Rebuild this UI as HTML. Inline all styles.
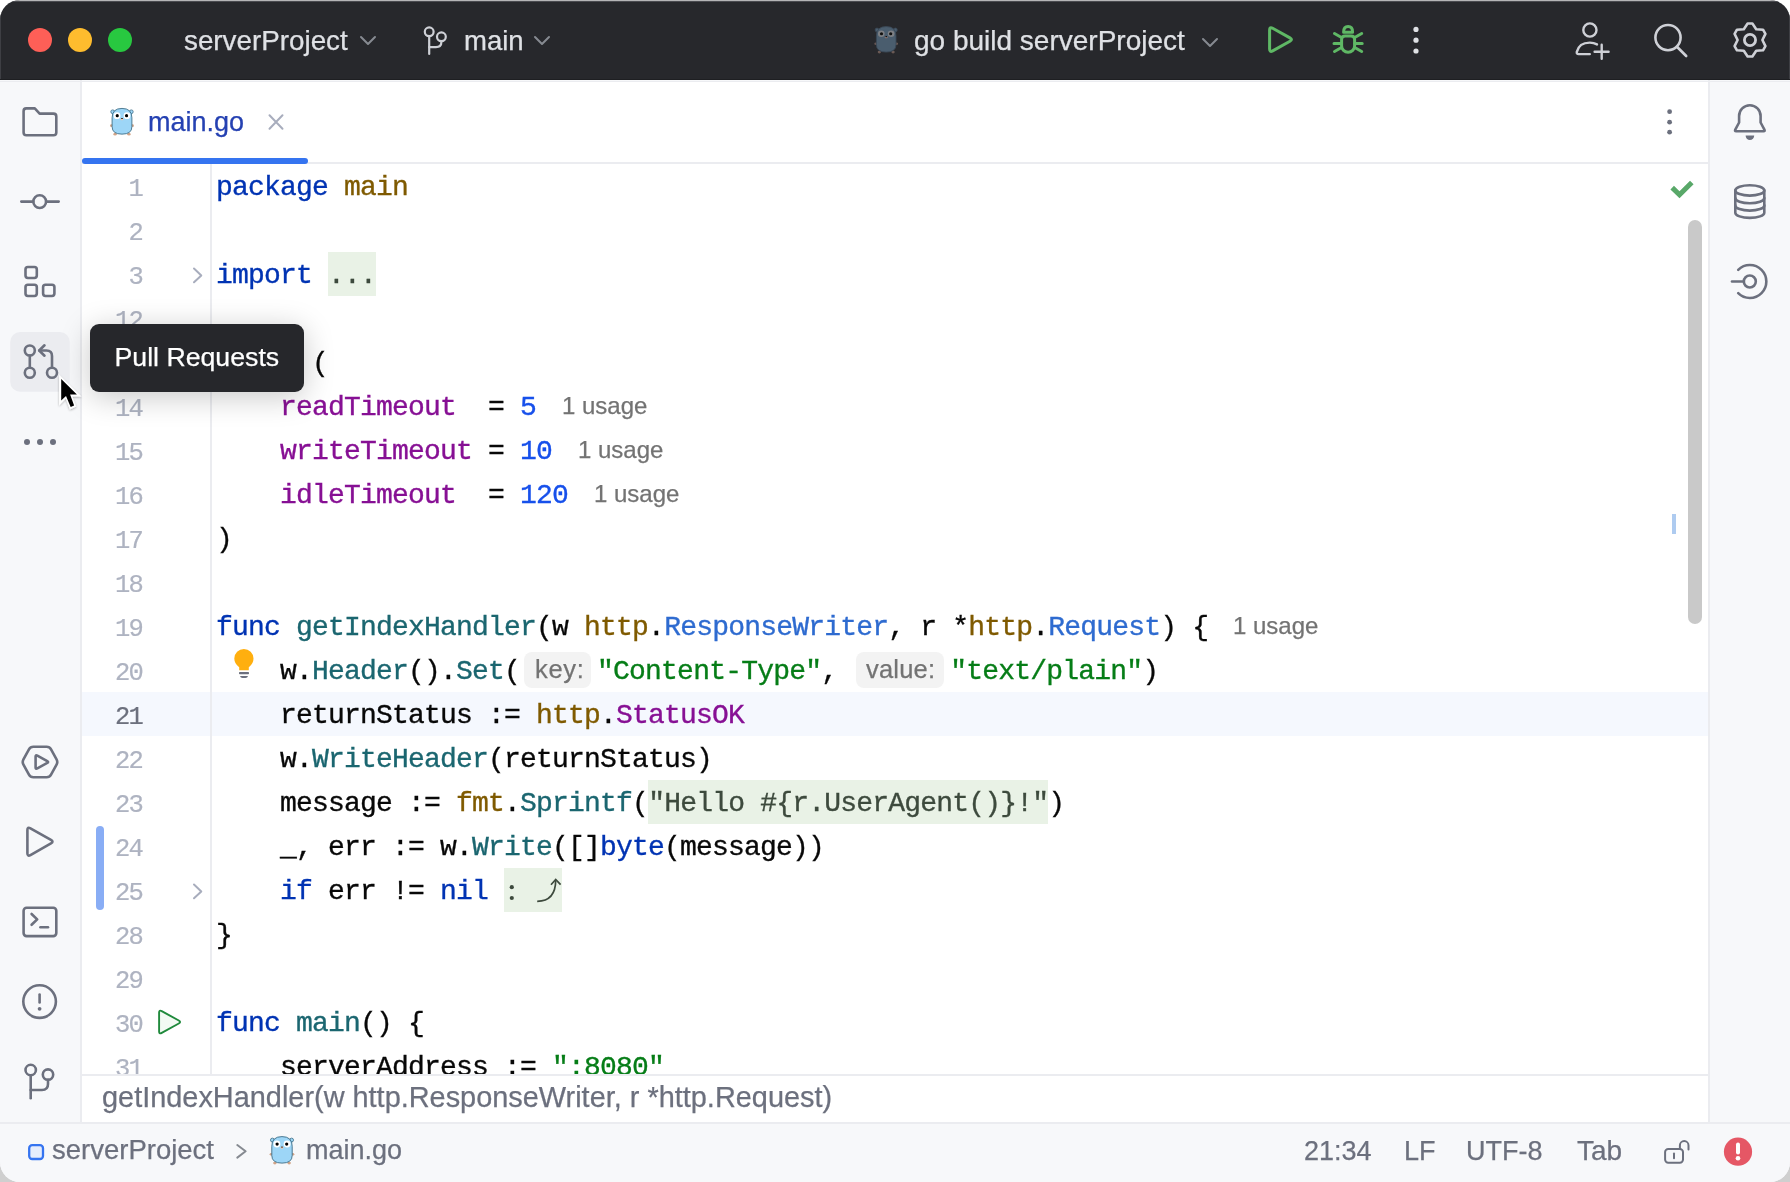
<!DOCTYPE html>
<html><head><meta charset="utf-8"><style>
*{margin:0;padding:0;box-sizing:border-box}
html,body{width:1790px;height:1182px;overflow:hidden;background:#ffffff}
body{position:relative;font-family:"Liberation Sans", sans-serif}
.t{position:absolute;white-space:pre;font-family:"Liberation Sans", sans-serif;-webkit-text-stroke:0.25px currentColor}
.abs{position:absolute}
.win{position:absolute;left:0;top:0;width:1790px;height:1182px;border-radius:20px;overflow:hidden;background:#f7f8fa;will-change:transform}
.row{position:absolute;left:82px;width:1626px;height:44px}
.ln{position:absolute;-webkit-text-stroke:0.2px currentColor;right:1566px;font-family:"Liberation Mono", monospace;font-size:25.5px;letter-spacing:-1.8px;color:#aeb3c1;white-space:pre}
.code{position:absolute;left:216px;font-family:"Liberation Mono", monospace;font-size:28px;letter-spacing:-0.8px;color:#080808;white-space:pre;-webkit-text-stroke:0.35px currentColor}
.kw{color:#0033b3}
.pk{color:#7f5a00}
.fn{color:#1b6670}
.cn{color:#871094}
.nu{color:#1750eb}
.st{color:#067d17}
.ty{color:#2e6bd0}
.hint{position:absolute;font-family:"Liberation Sans", sans-serif;font-size:24px;color:#737373;white-space:pre}
svg{position:absolute;overflow:visible}
</style></head>
<body>
<div class="abs" style="left:0;top:1160px;width:24px;height:22px;background:#cfcfcf"></div><div class="abs" style="left:1766px;top:1160px;width:24px;height:22px;background:#cfcfcf"></div><div class="win"><div class="abs" style="left:0;top:0;width:1790px;height:80px;background:#27282c"></div>
<div class="abs" style="left:0;top:0;width:1790px;height:1px;background:#b5b5b7"></div>
<div class="abs" style="left:0;top:1px;width:1790px;height:1px;background:#4a4b50"></div>
<div class="abs" style="left:0;top:79px;width:1790px;height:1px;background:#1e1f22"></div>
<div class="abs" style="left:0;top:0;width:1px;height:79px;background:#3e3f44"></div>
<div class="abs" style="left:1789px;top:0;width:1px;height:79px;background:#3e3f44"></div>
<div class="abs" style="left:0;top:81px;width:1790px;height:1px;background:#ebecf0"></div>
<div class="abs" style="left:28px;top:28px;width:24px;height:24px;border-radius:50%;background:#fe5f57"></div>
<div class="abs" style="left:68px;top:28px;width:24px;height:24px;border-radius:50%;background:#febc2e"></div>
<div class="abs" style="left:108px;top:28px;width:24px;height:24px;border-radius:50%;background:#28c840"></div>
<div class="t" style="left:184px;top:24.68px;font-size:27.8px;line-height:31.97px;color:#dfe1e5;letter-spacing:0px;">serverProject</div>
<div class="t" style="left:464px;top:24.96px;font-size:27.5px;line-height:31.62px;color:#dfe1e5;letter-spacing:0px;">main</div>
<div class="t" style="left:914px;top:24.50px;font-size:28px;line-height:32.2px;color:#dfe1e5;letter-spacing:0px;">go build serverProject</div>
<svg style="left:360px;top:36px" width="16" height="9"><path d="M1 1 L8.0 8 L15 1" fill="none" stroke="#868a91" stroke-width="2" stroke-linecap="round" stroke-linejoin="round"/></svg>
<svg style="left:534px;top:36px" width="16" height="9"><path d="M1 1 L8.0 8 L15 1" fill="none" stroke="#868a91" stroke-width="2" stroke-linecap="round" stroke-linejoin="round"/></svg>
<svg style="left:1202px;top:38px" width="16" height="9"><path d="M1 1 L8.0 8 L15 1" fill="none" stroke="#868a91" stroke-width="2" stroke-linecap="round" stroke-linejoin="round"/></svg>
<div class="abs" style="left:80px;top:80px;width:2px;height:1042px;background:#ebecf0"></div>
<div class="abs" style="left:1708px;top:80px;width:2px;height:1042px;background:#ebecf0"></div>
<div class="abs" style="left:82px;top:82px;width:1626px;height:992px;background:#ffffff"></div>
<div class="abs" style="left:82px;top:162px;width:1626px;height:2px;background:#ebecf0"></div>
<div class="abs" style="left:82px;top:158px;width:226px;height:6px;border-radius:3px;background:#3574f0"></div>
<div class="t" style="left:148px;top:107.32px;font-size:27px;line-height:31.05px;color:#2541b2;letter-spacing:0px;">main.go</div>
<div class="abs" style="left:82px;top:1074px;width:1626px;height:48px;background:#ffffff;border-top:2px solid #ebecf0"></div>
<div class="t" style="left:102px;top:1081.37px;font-size:28.9px;line-height:33.23px;color:#6c707e;letter-spacing:0px;">getIndexHandler(w http.ResponseWriter, r *http.Request)</div>
<div class="abs" style="left:0;top:1122px;width:1790px;height:60px;background:#f7f8fa;border-top:2px solid #ebecf0"></div>
<div class="t" style="left:52px;top:1134.16px;font-size:27.5px;line-height:31.62px;color:#6c707e;letter-spacing:0px;">serverProject</div>
<div class="t" style="left:306px;top:1134.62px;font-size:27px;line-height:31.05px;color:#6c707e;letter-spacing:0px;">main.go</div>
<div class="t" style="left:1304px;top:1135.82px;font-size:27px;line-height:31.05px;color:#6c707e;letter-spacing:0px;">21:34</div>
<div class="t" style="left:1404px;top:1135.82px;font-size:27px;line-height:31.05px;color:#6c707e;letter-spacing:0px;">LF</div>
<div class="t" style="left:1466px;top:1135.82px;font-size:27px;line-height:31.05px;color:#6c707e;letter-spacing:0px;">UTF-8</div>
<div class="t" style="left:1577px;top:1134.90px;font-size:28px;line-height:32.2px;color:#6c707e;letter-spacing:0px;">Tab</div>
<div class="abs" style="left:210px;top:164px;width:2px;height:910px;background:#ebecf0"></div>
<div class="abs" style="left:328px;top:252px;width:48px;height:44px;background:#e9f2e6"></div>
<div class="abs" style="left:648px;top:780px;width:400px;height:44px;background:#e9f2e6"></div>
<div class="abs" style="left:504px;top:868px;width:58px;height:44px;background:#e9f2e6"></div>
<div class="abs" style="left:82px;top:692px;width:1626px;height:44px;background:#f5f8fe"></div>
<div class="abs" style="left:0;top:0;width:1790px;height:1074px;overflow:hidden"><div class="row" style="top:164px;"><div class="ln" style="top:0;line-height:44px;;padding-top:4px">1</div><div class="code" style="left:134px;top:0;line-height:44px;padding-top:2px"><span class="kw">package</span> <span class="pk">main</span></div></div><div class="row" style="top:208px;"><div class="ln" style="top:0;line-height:44px;;padding-top:4px">2</div><div class="code" style="left:134px;top:0;line-height:44px;padding-top:2px"></div></div><div class="row" style="top:252px;"><div class="ln" style="top:0;line-height:44px;;padding-top:4px">3</div><div class="code" style="left:134px;top:0;line-height:44px;padding-top:2px"><span class="kw">import</span> <span style="color:#3d4a3d">...</span></div></div><div class="row" style="top:296px;"><div class="ln" style="top:0;line-height:44px;;padding-top:4px">12</div><div class="code" style="left:134px;top:0;line-height:44px;padding-top:2px"></div></div><div class="row" style="top:340px;"><div class="ln" style="top:0;line-height:44px;;padding-top:4px">13</div><div class="code" style="left:134px;top:0;line-height:44px;padding-top:2px"><span class="kw">const</span> (</div></div><div class="row" style="top:384px;"><div class="ln" style="top:0;line-height:44px;;padding-top:4px">14</div><div class="code" style="left:134px;top:0;line-height:44px;padding-top:2px">    <span class="cn">readTimeout</span>  = <span class="nu">5</span></div></div><div class="row" style="top:428px;"><div class="ln" style="top:0;line-height:44px;;padding-top:4px">15</div><div class="code" style="left:134px;top:0;line-height:44px;padding-top:2px">    <span class="cn">writeTimeout</span> = <span class="nu">10</span></div></div><div class="row" style="top:472px;"><div class="ln" style="top:0;line-height:44px;;padding-top:4px">16</div><div class="code" style="left:134px;top:0;line-height:44px;padding-top:2px">    <span class="cn">idleTimeout</span>  = <span class="nu">120</span></div></div><div class="row" style="top:516px;"><div class="ln" style="top:0;line-height:44px;;padding-top:4px">17</div><div class="code" style="left:134px;top:0;line-height:44px;padding-top:2px">)</div></div><div class="row" style="top:560px;"><div class="ln" style="top:0;line-height:44px;;padding-top:4px">18</div><div class="code" style="left:134px;top:0;line-height:44px;padding-top:2px"></div></div><div class="row" style="top:604px;"><div class="ln" style="top:0;line-height:44px;;padding-top:4px">19</div><div class="code" style="left:134px;top:0;line-height:44px;padding-top:2px"><span class="kw">func</span> <span class="fn">getIndexHandler</span>(w <span class="pk">http</span>.<span class="ty">ResponseWriter</span>, r *<span class="pk">http</span>.<span class="ty">Request</span>) {</div></div><div class="row" style="top:648px;"><div class="ln" style="top:0;line-height:44px;;padding-top:4px">20</div><div class="code" style="left:134px;top:0;line-height:44px;padding-top:2px">    w.<span class="fn">Header</span>().<span class="fn">Set</span>(<span style="display:inline-block;width:77px"></span><span class="st">"Content-Type"</span>, <span style="display:inline-block;width:97px"></span><span class="st">"text/plain"</span>)</div></div><div class="row" style="top:692px;"><div class="ln" style="top:0;line-height:44px;color:#6c707e;;padding-top:4px">21</div><div class="code" style="left:134px;top:0;line-height:44px;padding-top:2px">    returnStatus := <span class="pk">http</span>.<span class="cn">StatusOK</span></div></div><div class="row" style="top:736px;"><div class="ln" style="top:0;line-height:44px;;padding-top:4px">22</div><div class="code" style="left:134px;top:0;line-height:44px;padding-top:2px">    w.<span class="fn">WriteHeader</span>(returnStatus)</div></div><div class="row" style="top:780px;"><div class="ln" style="top:0;line-height:44px;;padding-top:4px">23</div><div class="code" style="left:134px;top:0;line-height:44px;padding-top:2px">    message := <span class="pk">fmt</span>.<span class="fn">Sprintf</span>(<span style="color:#3d4a3d">"Hello #{r.UserAgent()}!"</span>)</div></div><div class="row" style="top:824px;"><div class="ln" style="top:0;line-height:44px;;padding-top:4px">24</div><div class="code" style="left:134px;top:0;line-height:44px;padding-top:2px">    _, err := w.<span class="fn">Write</span>([]<span class="kw">byte</span>(message))</div></div><div class="row" style="top:868px;"><div class="ln" style="top:0;line-height:44px;;padding-top:4px">25</div><div class="code" style="left:134px;top:0;line-height:44px;padding-top:2px">    <span class="kw">if</span> err != <span class="kw">nil</span></div></div><div class="row" style="top:912px;"><div class="ln" style="top:0;line-height:44px;;padding-top:4px">28</div><div class="code" style="left:134px;top:0;line-height:44px;padding-top:2px">}</div></div><div class="row" style="top:956px;"><div class="ln" style="top:0;line-height:44px;;padding-top:4px">29</div><div class="code" style="left:134px;top:0;line-height:44px;padding-top:2px"></div></div><div class="row" style="top:1000px;"><div class="ln" style="top:0;line-height:44px;;padding-top:4px">30</div><div class="code" style="left:134px;top:0;line-height:44px;padding-top:2px"><span class="kw">func</span> <span class="fn">main</span>() {</div></div><div class="row" style="top:1044px;"><div class="ln" style="top:0;line-height:44px;;padding-top:4px">31</div><div class="code" style="left:134px;top:0;line-height:44px;padding-top:2px">    serverAddress := <span class="st">":8080"</span></div></div></div>
<div class="abs" style="left:210px;top:164px;width:2px;height:910px;background:#ebecf0"></div>
<div class="t" style="left:562px;top:392.38px;font-size:24px;line-height:27.6px;color:#737373;letter-spacing:0px;">1 usage</div>
<div class="t" style="left:578px;top:436.38px;font-size:24px;line-height:27.6px;color:#737373;letter-spacing:0px;">1 usage</div>
<div class="t" style="left:594px;top:480.38px;font-size:24px;line-height:27.6px;color:#737373;letter-spacing:0px;">1 usage</div>
<div class="t" style="left:1233px;top:612.38px;font-size:24px;line-height:27.6px;color:#737373;letter-spacing:0px;">1 usage</div>
<div class="abs" style="left:524px;top:652px;width:67px;height:36px;border-radius:8px;background:#f3f3f3"></div>
<div class="t" style="left:535px;top:654.50px;font-size:25.5px;line-height:29.32px;color:#737373;letter-spacing:0.7px;">key:</div>
<div class="abs" style="left:856px;top:652px;width:88px;height:36px;border-radius:8px;background:#f3f3f3"></div>
<div class="t" style="left:866px;top:654.50px;font-size:25.5px;line-height:29.32px;color:#737373;letter-spacing:0.2px;">value:</div>
<div class="abs" style="left:1688px;top:220px;width:14px;height:404px;border-radius:7px;background:#c9c9c9"></div>
<div class="abs" style="left:1672px;top:514px;width:4px;height:20px;background:#aecbf0"></div>
<div class="abs" style="left:96px;top:826px;width:8px;height:84px;border-radius:4px;background:#89adf5"></div>
<div class="abs" style="left:90px;top:324px;width:214px;height:68px;border-radius:9px;background:#26272b;box-shadow:0 5px 30px rgba(0,0,0,0.22)"></div>
<div class="t" style="left:114.5px;top:342.40px;font-size:26.7px;line-height:30.7px;color:#ffffff;letter-spacing:0px;">Pull Requests</div>
<svg style="left:0;top:0" width="1790" height="1182" viewBox="0 0 1790 1182"><defs><filter id="csh" x="-50%" y="-50%" width="200%" height="200%"><feDropShadow dx="0" dy="1" stdDeviation="1.2" flood-opacity="0.3"/></filter></defs><g fill="none" stroke="#ced0d6" stroke-width="2.2" stroke-linecap="round" stroke-linejoin="round"><circle cx="429.2" cy="31.8" r="4.4"/><circle cx="441.4" cy="36.8" r="4.4"/><path d="M429.2 36.2 V54"/><path d="M429.2 47.2 H436 Q441.4 47.2 441.4 41.8 V41.2"/></g><path d="M1272.66 28.30 Q1269.60 26.60 1269.60 30.10 L1269.60 49.10 Q1269.60 52.60 1272.66 50.90 L1289.94 41.30 Q1293.00 39.60 1289.94 37.90 Z" fill="none" stroke="#5fb865" stroke-width="3" stroke-linecap="round" stroke-linejoin="round"/><g fill="none" stroke="#5fb865" stroke-width="3" stroke-linecap="round" stroke-linejoin="round"><path d="M1343.6 32.2 Q1343.6 26.6 1348.1 26.6 Q1352.6 26.6 1352.6 32.2 Z"/><path d="M1341.6 39.6 Q1341.6 35.9 1345.2 35.9 H1351 Q1354.6 35.9 1354.6 39.6 V45.8 A6.5 6.4 0 0 1 1341.6 45.8 Z"/><path d="M1334.5 33.5 L1341.5 37.5 M1334 43.4 H1341.5 M1334.5 51.5 L1341.5 47.5"/><path d="M1361.7 33.5 L1354.7 37.5 M1362.2 43.4 H1354.7 M1361.7 51.5 L1354.7 47.5"/></g><circle cx="1416" cy="29.4" r="2.6" fill="#dfe1e5"/><circle cx="1416" cy="40.2" r="2.6" fill="#dfe1e5"/><circle cx="1416" cy="51" r="2.6" fill="#dfe1e5"/><g fill="none" stroke="#ced0d6" stroke-width="2.4" stroke-linecap="round" stroke-linejoin="round"><circle cx="1589.9" cy="30" r="6.6"/><path d="M1589.8 54.1 H1578.6 Q1576.4 54.1 1576.8 51.9 C1578.2 46.2 1583 42.6 1589.8 42.6 Q1593.8 42.6 1597 44.4"/><path d="M1601.7 44.8 V58.8 M1594.6 51.8 H1608.6"/></g><g fill="none" stroke="#ced0d6" stroke-width="2.6" stroke-linecap="round" stroke-linejoin="round"><circle cx="1668" cy="37.6" r="12.6"/><path d="M1677.2 47 L1686.2 56"/></g><path d="M1747.60 23.57 L1752.40 23.57 L1756.20 29.26 L1763.03 29.71 L1765.42 33.86 L1762.40 40.00 L1765.42 46.14 L1763.03 50.29 L1756.20 50.74 L1752.40 56.43 L1747.60 56.43 L1743.80 50.74 L1736.97 50.29 L1734.58 46.14 L1737.60 40.00 L1734.58 33.86 L1736.97 29.71 L1743.80 29.26 Z" fill="none" stroke="#ced0d6" stroke-width="2.6" stroke-linecap="round" stroke-linejoin="round"/><circle cx="1750" cy="40" r="5.6" fill="none" stroke="#ced0d6" stroke-width="2.8" stroke-linecap="round" stroke-linejoin="round"/><path d="M26.2 108.4 H34.8 L39.6 113.6 H53.5 Q56.3 113.6 56.3 116.4 V132.4 Q56.3 135.2 53.5 135.2 H26.4 Q23.6 135.2 23.6 132.4 V111.2 Q23.6 108.4 26.2 108.4 Z" fill="none" stroke="#6c707e" stroke-width="2.6" stroke-linecap="round" stroke-linejoin="round"/><g fill="none" stroke="#6c707e" stroke-width="2.6" stroke-linecap="round" stroke-linejoin="round"><circle cx="39.7" cy="201.6" r="6.4"/><path d="M21.3 201.6 H33.3 M46.1 201.6 H58.7"/></g><g fill="none" stroke="#6c707e" stroke-width="2.6" stroke-linecap="round" stroke-linejoin="round"><rect x="25.5" y="267" width="11.3" height="11" rx="2.4"/><rect x="25.5" y="284.7" width="11.3" height="11.3" rx="2.4"/><rect x="43.1" y="284.7" width="11.3" height="11.3" rx="2.4"/></g><rect x="10.2" y="332" width="59.6" height="59.7" rx="10" fill="#ebecf0"/><g fill="none" stroke="#6c707e" stroke-width="2.6" stroke-linecap="round" stroke-linejoin="round"><circle cx="29.8" cy="350.5" r="5"/><circle cx="29.8" cy="372.7" r="5"/><circle cx="52" cy="372.7" r="5"/><path d="M29.8 355.5 V367.7"/><path d="M52 367.7 V356 Q52 350.5 46.5 350.5 H39.3"/><path d="M44.5 345.3 L39.2 350.5 L44.5 355.7"/></g><circle cx="27" cy="441.9" r="3" fill="#6c707e"/><circle cx="40" cy="441.9" r="3" fill="#6c707e"/><circle cx="53" cy="441.9" r="3" fill="#6c707e"/><path d="M23.45 764.63 Q22.00 762.00 23.45 759.37 L28.95 749.43 Q30.40 746.80 33.40 746.80 L46.60 746.80 Q49.60 746.80 51.05 749.43 L56.55 759.37 Q58.00 762.00 56.55 764.63 L51.05 774.57 Q49.60 777.20 46.60 777.20 L33.40 777.20 Q30.40 777.20 28.95 774.57 Z" fill="none" stroke="#6c707e" stroke-width="2.6" stroke-linecap="round" stroke-linejoin="round"/><path d="M37.35 755.57 Q35.60 754.60 35.60 756.60 L35.60 767.40 Q35.60 769.40 37.35 768.43 L47.25 762.97 Q49.00 762.00 47.25 761.03 Z" fill="none" stroke="#6c707e" stroke-width="2.6" stroke-linecap="round" stroke-linejoin="round"/><path d="M30.44 828.33 Q27.40 826.60 27.40 830.10 L27.40 853.30 Q27.40 856.80 30.44 855.07 L50.96 843.43 Q54.00 841.70 50.96 839.97 Z" fill="none" stroke="#6c707e" stroke-width="2.6" stroke-linecap="round" stroke-linejoin="round"/><g fill="none" stroke="#6c707e" stroke-width="2.6" stroke-linecap="round" stroke-linejoin="round"><rect x="23.6" y="907.7" width="32.7" height="28.4" rx="3"/><path d="M31.6 914 L37.2 919.4 L31.6 924.8"/><path d="M40.4 927.3 H48"/></g><g fill="none" stroke="#6c707e" stroke-width="2.6" stroke-linecap="round" stroke-linejoin="round"><circle cx="39.6" cy="1001.6" r="16.3"/><path d="M39.6 994.6 V1002.4"/></g><circle cx="39.6" cy="1008.8" r="1.9" fill="#6c707e"/><g fill="none" stroke="#6c707e" stroke-width="2.6" stroke-linecap="round" stroke-linejoin="round"><circle cx="30.7" cy="1070" r="5.2"/><circle cx="48" cy="1074.6" r="5.2"/><path d="M30.7 1075.2 V1098.2"/><path d="M30.7 1090 H42 Q48 1090 48 1084 V1079.8"/></g><path d="M1739.1 122.5 V116 A10.75 10.75 0 0 1 1760.6 116 V122.5 L1764.4 129.6 Q1765.2 131.2 1763.6 131.2 H1736.1 Q1734.5 131.2 1735.3 129.6 Z" fill="none" stroke="#6c707e" stroke-width="2.6" stroke-linecap="round" stroke-linejoin="round"/><path d="M1745.6 135.6 H1754.2 A4.3 4.3 0 0 1 1745.6 135.6 Z" fill="#6c707e"/><g fill="none" stroke="#6c707e" stroke-width="2.6" stroke-linecap="round" stroke-linejoin="round"><ellipse cx="1749.8" cy="190.4" rx="14.5" ry="5.2"/><path d="M1735.3 190.4 V212.7 A14.5 5.2 0 0 0 1764.3 212.7 V190.4"/><path d="M1735.3 198.1 A14.5 5.2 0 0 0 1764.3 198.1"/><path d="M1735.3 205.4 A14.5 5.2 0 0 0 1764.3 205.4"/></g><g fill="none" stroke="#6c707e" stroke-width="2.6" stroke-linecap="round" stroke-linejoin="round"><circle cx="1749.8" cy="281.5" r="6"/><path d="M1738.2 269.8 A16.5 16.5 0 1 1 1738.2 293.2"/><path d="M1732 281.5 H1743.8"/></g><path d="M269.5 115.3 L282.5 128.7 M282.5 115.3 L269.5 128.7" fill="none" stroke="#a8adbd" stroke-width="2" stroke-linecap="round" stroke-linejoin="round"/><circle cx="1669.6" cy="111.7" r="2.4" fill="#6c707e"/><circle cx="1669.6" cy="122.2" r="2.4" fill="#6c707e"/><circle cx="1669.6" cy="132.2" r="2.4" fill="#6c707e"/><g transform="translate(112.1 108.4) scale(0.99)"><circle cx="0.6" cy="3.4" r="1.9" fill="#9dd6f7" stroke="#3f6f88" stroke-width="0.8"/><circle cx="19.4" cy="3.4" r="1.9" fill="#9dd6f7" stroke="#3f6f88" stroke-width="0.8"/><ellipse cx="-0.4" cy="17.4" rx="1.7" ry="1.3" fill="#d2a487"/><ellipse cx="20.4" cy="17.4" rx="1.7" ry="1.3" fill="#d2a487"/><ellipse cx="3" cy="26" rx="1.7" ry="1.4" fill="#d2a487"/><ellipse cx="17" cy="26" rx="1.7" ry="1.4" fill="#d2a487"/><path d="M0 9.5 Q0 0 10 0 Q20 0 20 9.5 V18.5 Q20 26 10 26 Q0 26 0 18.5 Z" fill="#9dd6f7" stroke="#3f6f88" stroke-width="0.9"/><circle cx="5" cy="7.3" r="3.4" fill="#ffffff"/><circle cx="15" cy="7.3" r="3.4" fill="#ffffff"/><circle cx="5.2" cy="7.3" r="1.6" fill="#000000"/><circle cx="14.6" cy="7.3" r="1.6" fill="#000000"/><ellipse cx="10" cy="10.8" rx="1.4" ry="1.2" fill="#f1c7ae"/><ellipse cx="10" cy="10.2" rx="0.9" ry="0.6" fill="#000"/></g><g transform="translate(876.4 26.6) scale(0.98)"><circle cx="0.6" cy="3.4" r="1.9" fill="#4a5d6e" stroke="#3a4856" stroke-width="0.8"/><circle cx="19.4" cy="3.4" r="1.9" fill="#4a5d6e" stroke="#3a4856" stroke-width="0.8"/><ellipse cx="-0.4" cy="17.4" rx="1.7" ry="1.3" fill="#6b5a55"/><ellipse cx="20.4" cy="17.4" rx="1.7" ry="1.3" fill="#6b5a55"/><ellipse cx="3" cy="26" rx="1.7" ry="1.4" fill="#6b5a55"/><ellipse cx="17" cy="26" rx="1.7" ry="1.4" fill="#6b5a55"/><path d="M0 9.5 Q0 0 10 0 Q20 0 20 9.5 V18.5 Q20 26 10 26 Q0 26 0 18.5 Z" fill="#4a5d6e" stroke="#3a4856" stroke-width="0.9"/><circle cx="5" cy="7.3" r="3.4" fill="#7d7f83"/><circle cx="15" cy="7.3" r="3.4" fill="#7d7f83"/><circle cx="5.2" cy="7.3" r="1.6" fill="#111111"/><circle cx="14.6" cy="7.3" r="1.6" fill="#111111"/><ellipse cx="10" cy="10.8" rx="1.4" ry="1.2" fill="#8a7570"/><ellipse cx="10" cy="10.2" rx="0.9" ry="0.6" fill="#000"/></g><g transform="translate(271.8 1136.6) scale(1.02)"><circle cx="0.6" cy="3.4" r="1.9" fill="#9dd6f7" stroke="#3f6f88" stroke-width="0.8"/><circle cx="19.4" cy="3.4" r="1.9" fill="#9dd6f7" stroke="#3f6f88" stroke-width="0.8"/><ellipse cx="-0.4" cy="17.4" rx="1.7" ry="1.3" fill="#d2a487"/><ellipse cx="20.4" cy="17.4" rx="1.7" ry="1.3" fill="#d2a487"/><ellipse cx="3" cy="26" rx="1.7" ry="1.4" fill="#d2a487"/><ellipse cx="17" cy="26" rx="1.7" ry="1.4" fill="#d2a487"/><path d="M0 9.5 Q0 0 10 0 Q20 0 20 9.5 V18.5 Q20 26 10 26 Q0 26 0 18.5 Z" fill="#9dd6f7" stroke="#3f6f88" stroke-width="0.9"/><circle cx="5" cy="7.3" r="3.4" fill="#ffffff"/><circle cx="15" cy="7.3" r="3.4" fill="#ffffff"/><circle cx="5.2" cy="7.3" r="1.6" fill="#000000"/><circle cx="14.6" cy="7.3" r="1.6" fill="#000000"/><ellipse cx="10" cy="10.8" rx="1.4" ry="1.2" fill="#f1c7ae"/><ellipse cx="10" cy="10.2" rx="0.9" ry="0.6" fill="#000"/></g><path d="M1672.2 187.6 L1679.5 194.8 L1691.8 182.4" fill="none" stroke="#59a869" stroke-width="5"/><path d="M194 268.5 L201.3 275.4 L194 282.29999999999995" fill="none" stroke="#a8adbd" stroke-width="2" stroke-linecap="round" stroke-linejoin="round"/><path d="M194 884.5 L201.3 891.4 L194 898.3" fill="none" stroke="#a8adbd" stroke-width="2" stroke-linecap="round" stroke-linejoin="round"/><path d="M239.2 670.2 V667.2 Q234.3 663.6 234.3 658.5 A9.6 9.6 0 0 1 253.5 658.5 Q253.5 663.6 248.8 667.2 V670.2 Z" fill="#ffaf0f"/><rect x="239" y="672" width="10" height="2.2" rx="0.8" fill="#6c707e"/><path d="M240 676 H248 Q247.5 678 245.5 678 H242.5 Q240.5 678 240 676 Z" fill="#6c707e"/><path d="M161.72 1011.06 Q159.10 1009.60 159.10 1012.60 L159.10 1031.40 Q159.10 1034.40 161.72 1032.94 L178.78 1023.46 Q181.40 1022.00 178.78 1020.54 Z" fill="#f2faf3" stroke="#208a3c" stroke-width="1.9" stroke-linejoin="round"/><circle cx="511.8" cy="887.2" r="2.1" fill="#3d4a3d"/><circle cx="511.8" cy="898" r="2.1" fill="#3d4a3d"/><path d="M537.2 901.3 Q555.6 901 555.7 880.2" fill="none" stroke="#3d4a3d" stroke-width="1.7"/><path d="M551 884.7 L555.7 879.5 L560.6 884.7" fill="none" stroke="#3d4a3d" stroke-width="1.7"/><rect x="29.2" y="1145.2" width="13.8" height="13.8" rx="3" fill="#e6edfc" stroke="#3574f0" stroke-width="2.3"/><path d="M237.3 1145 L245.6 1151.3 L237.3 1157.6" fill="none" stroke="#868a91" stroke-width="2" stroke-linecap="round" stroke-linejoin="round"/><g fill="none" stroke="#6c707e" stroke-width="2" stroke-linecap="round" stroke-linejoin="round"><rect x="1665.1" y="1148.9" width="17.9" height="13.8" rx="3.2"/><path d="M1679.9 1148.9 V1145.4 A4.3 4.3 0 0 1 1688.5 1145.4 V1149.4"/><path d="M1674 1153.6 V1158.3"/></g><circle cx="1738" cy="1151.7" r="14.1" fill="#e55765"/><path d="M1738 1144.5 V1152.4" stroke="#fff" stroke-width="4" stroke-linecap="round"/><circle cx="1738" cy="1158.2" r="2.3" fill="#fff"/><g filter="url(#csh)"><path d="M59.1 374.7 V405.6 L65.8 398.6 L69.9 409.4 L76.2 406.6 L72.3 396.6 H81.5 Z" fill="#fff"/></g><path d="M61.2 379 V400.5 L66 396 L70.7 406.9 L74.1 405.4 L70.1 394.6 H76.9 Z" fill="#000"/></svg></div>
</body></html>
